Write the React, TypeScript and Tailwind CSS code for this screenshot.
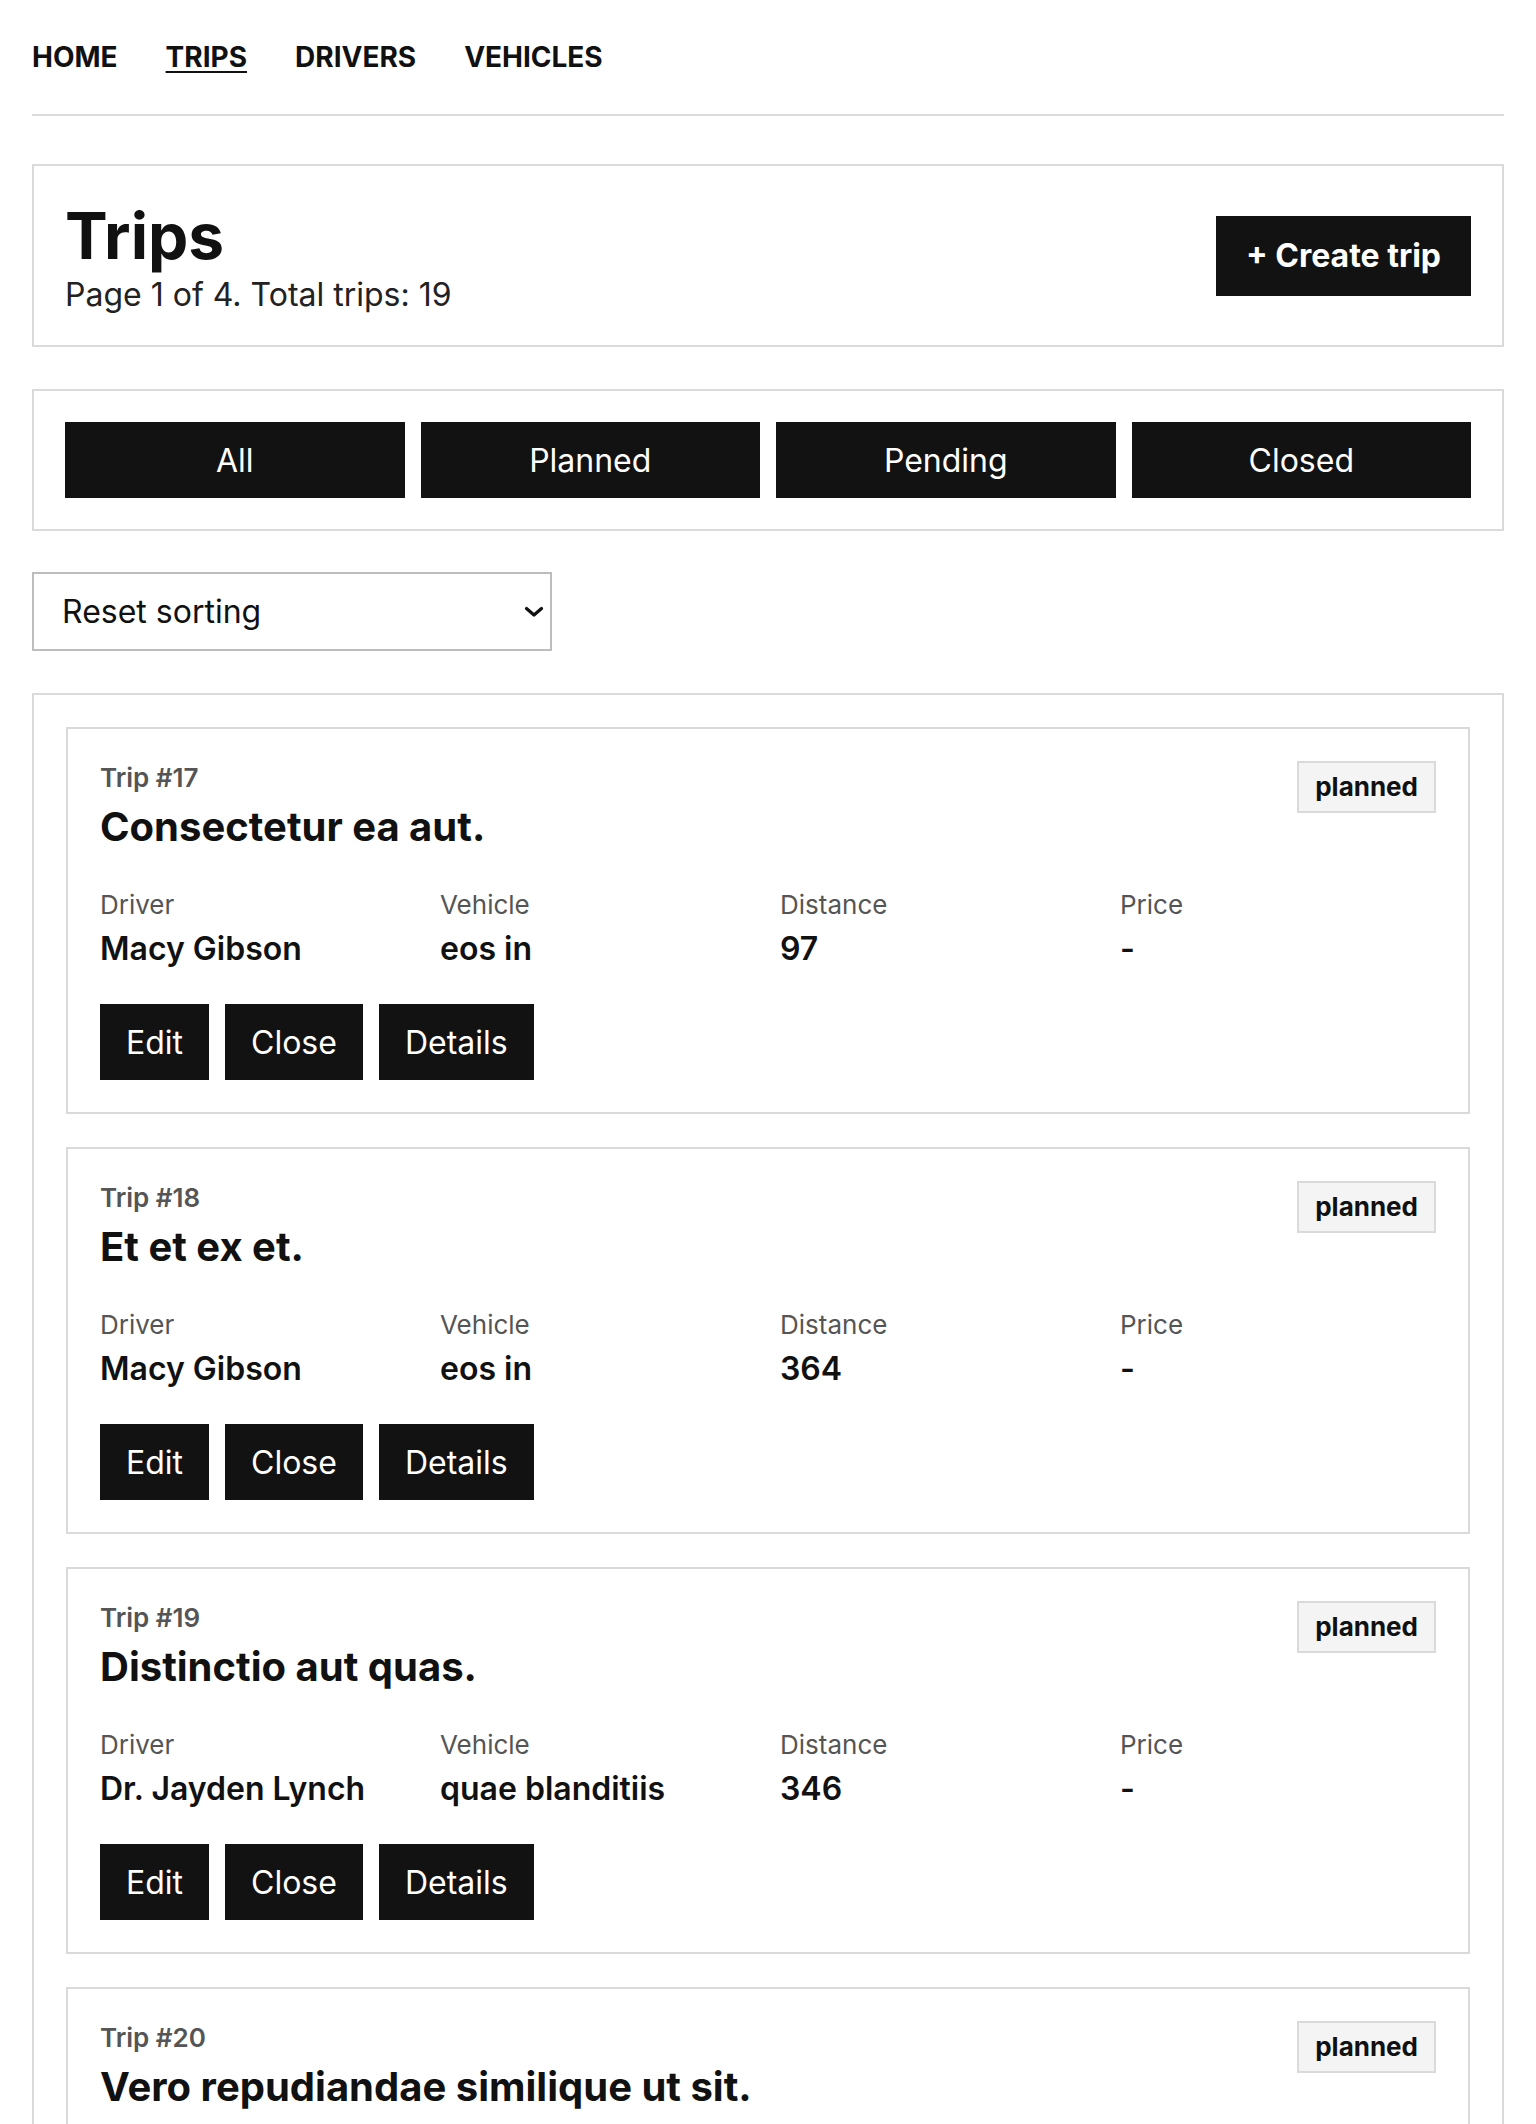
import React from "react"

type Trip = {
  id: number
  title: string
  driver: string
  vehicle: string
  distance: number
  price: string
  status: string
}

const trips: Trip[] = [
  { id: 17, title: "Consectetur ea aut.", driver: "Macy Gibson", vehicle: "eos in", distance: 97, price: "-", status: "planned" },
  { id: 18, title: "Et et ex et.", driver: "Macy Gibson", vehicle: "eos in", distance: 364, price: "-", status: "planned" },
  { id: 19, title: "Distinctio aut quas.", driver: "Dr. Jayden Lynch", vehicle: "quae blanditiis", distance: 346, price: "-", status: "planned" },
  { id: 20, title: "Vero repudiandae similique ut sit.", driver: "Macy Gibson", vehicle: "eos in", distance: 212, price: "-", status: "planned" },
]

const navItems = ["HOME", "TRIPS", "DRIVERS", "VEHICLES"]
const filters = ["All", "Planned", "Pending", "Closed"]

function TripCard({ trip }: { trip: Trip }) {
  const fields = [
    { label: "Driver", value: trip.driver },
    { label: "Vehicle", value: trip.vehicle },
    { label: "Distance", value: String(trip.distance) },
    { label: "Price", value: trip.price },
  ]

  return (
    <div className="border-2 border-[#dadada] p-8">
      <div className="flex items-start justify-between">
        <div>
          <div className="text-[26px] leading-[34px] font-semibold text-[#555]">Trip #{trip.id}</div>
          <h2 className="mt-[7px] text-[40px] leading-[49px] font-bold text-[#111]">{trip.title}</h2>
        </div>
        <span className="border-2 border-[#dadada] bg-[#f4f4f4] px-4 py-[7px] text-[26px] leading-[34px] font-bold text-[#111]">
          {trip.status}
        </span>
      </div>

      {/* trip facts */}
      <div className="mt-[37px] grid grid-cols-4 gap-6">
        {fields.map((field) => (
          <div key={field.label}>
            <div className="text-[26px] leading-[34px] text-[#555]">{field.label}</div>
            <div className="mt-[7px] text-[32px] leading-[39px] font-semibold text-[#111]">{field.value}</div>
          </div>
        ))}
      </div>

      <div className="mt-9 flex gap-4">
        {["Edit", "Close", "Details"].map((label) => (
          <button key={label} className="h-[76px] bg-[#121212] px-[26px] text-[32px] leading-[45px] text-white">
            {label}
          </button>
        ))}
      </div>
    </div>
  )
}

export default function App() {
  return (
    <div className="min-h-screen bg-white px-8 font-['Inter','Liberation_Sans',sans-serif] text-[#111]">
      <nav className="flex gap-12 border-b-2 border-[#dadada] pt-[35px] pb-[34px] text-[28px] leading-[45px] font-bold">
        {navItems.map((item) => (
          <a key={item} href="#" className={item === "TRIPS" ? "underline decoration-2 underline-offset-[4px]" : ""}>
            {item}
          </a>
        ))}
      </nav>

      {/* page header */}
      <div className="mt-12 flex items-center justify-between border-2 border-[#dadada] px-[31px] pt-[34px] pb-[28px]">
        <div>
          <h1 className="text-[64px] leading-[72px] font-bold text-[#111]">Trips</h1>
          <p className="text-[32px] leading-[45px] text-[#222]">Page 1 of 4. Total trips: 19</p>
        </div>
        <button className="-mt-[6px] h-[80px] bg-[#121212] px-[30px] text-[32px] leading-[45px] font-bold text-white">
          + Create trip
        </button>
      </div>

      {/* status filter */}
      <div className="mt-[42px] flex gap-4 border-2 border-[#dadada] p-[31px]">
        {filters.map((f) => (
          <button key={f} className="h-[76px] flex-1 bg-[#121212] text-[32px] leading-[45px] text-white">
            {f}
          </button>
        ))}
      </div>

      <div className="relative mt-[41px] w-[520px]">
        <select className="h-[79px] w-full appearance-none border-2 border-[#bdbdbd] bg-white pl-[28px] pr-14 text-[32px] leading-[45px] text-[#111] outline-none">
          <option>Reset sorting</option>
          <option>Distance</option>
          <option>Price</option>
        </select>
        <svg
          className="pointer-events-none absolute right-[8px] top-[34px]"
          width="20"
          height="12"
          viewBox="0 0 20 12"
          fill="none"
        >
          <path d="M2.5 2.5 L10 9 L17.5 2.5" stroke="#111" strokeWidth="3.2" strokeLinecap="round" strokeLinejoin="round" />
        </svg>
      </div>

      <div className="mt-[42px] flex flex-col gap-[33px] border-2 border-[#dadada] p-8">
        {trips.map((trip) => (
          <TripCard key={trip.id} trip={trip} />
        ))}
      </div>
    </div>
  )
}
